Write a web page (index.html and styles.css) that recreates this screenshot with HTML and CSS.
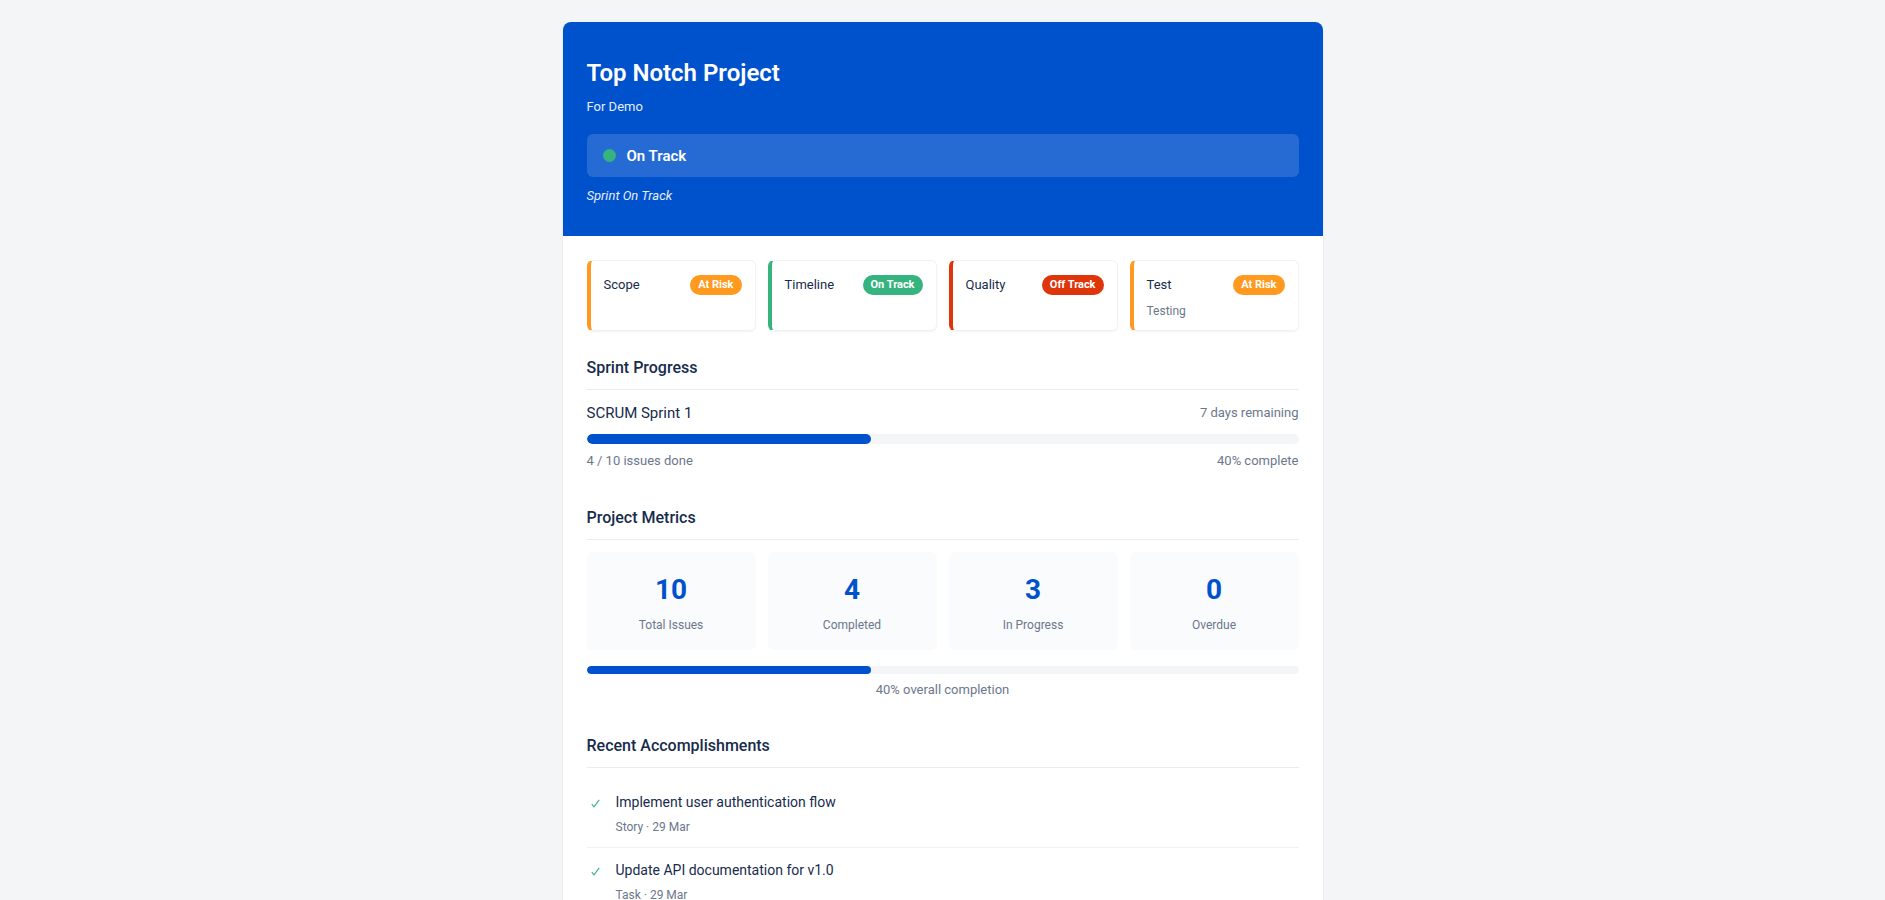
FILE: index.html
```html
<!DOCTYPE html>
<html>
	<head>
		<meta charset="utf-8">
		<title>Top Notch Project</title>
		<link rel="stylesheet" href="styles.css">
	</head>
	<body>
		<div class="report">
			<div class="report-head">
				<h1 class="project-name">Top Notch Project</h1>
				<div class="project-desc">For Demo</div>
				<div class="overall">
					<span class="dot"></span>
					<span class="overall-text">On Track</span>
				</div>
				<div class="overall-note">Sprint On Track</div>
			</div>

			<div class="report-body">
				<div class="status-grid">
					<div class="status-card orange">
						<div class="status-top">
							<span class="status-name">Scope</span>
							<span class="badge bg-orange">At Risk</span>
						</div>
					</div>
					<div class="status-card green">
						<div class="status-top">
							<span class="status-name">Timeline</span>
							<span class="badge bg-green">On Track</span>
						</div>
					</div>
					<div class="status-card red">
						<div class="status-top">
							<span class="status-name">Quality</span>
							<span class="badge bg-red">Off Track</span>
						</div>
					</div>
					<div class="status-card orange">
						<div class="status-top">
							<span class="status-name">Test</span>
							<span class="badge bg-orange">At Risk</span>
						</div>
						<div class="status-desc">Testing</div>
					</div>
				</div>

				<div class="section">
					<h2 class="section-title">Sprint Progress</h2>
					<div class="sprint">
						<div class="row">
							<span class="sprint-name">SCRUM Sprint 1</span>
							<span class="muted">7 days remaining</span>
						</div>
						<div class="track"><div class="fill" style="width: 40%"></div></div>
						<div class="row small">
							<span class="muted">4 / 10 issues done</span>
							<span class="muted">40% complete</span>
						</div>
					</div>
				</div>

				<div class="section">
					<h2 class="section-title">Project Metrics</h2>
					<div class="metrics">
						<div class="metric">
							<div class="metric-num">10</div>
							<div class="metric-label">Total Issues</div>
						</div>
						<div class="metric">
							<div class="metric-num">4</div>
							<div class="metric-label">Completed</div>
						</div>
						<div class="metric">
							<div class="metric-num">3</div>
							<div class="metric-label">In Progress</div>
						</div>
						<div class="metric">
							<div class="metric-num">0</div>
							<div class="metric-label">Overdue</div>
						</div>
					</div>
					<div class="track thin"><div class="fill" style="width: 40%"></div></div>
					<div class="overall-done">40% overall completion</div>
				</div>

				<div class="section">
					<h2 class="section-title">Recent Accomplishments</h2>
					<ul class="done-list">
						<li>
							<span class="check"><svg width="9" height="9" viewBox="0 0 9 9"><path d="M0.8 5.2 L3 7.8 L8.2 0.8" fill="none" stroke="#36b37e" stroke-width="1.1"/></svg></span>
							<div>
								<div class="done-title">Implement user authentication flow</div>
								<div class="done-meta">Story · 29 Mar</div>
							</div>
						</li>
						<li>
							<span class="check"><svg width="9" height="9" viewBox="0 0 9 9"><path d="M0.8 5.2 L3 7.8 L8.2 0.8" fill="none" stroke="#36b37e" stroke-width="1.1"/></svg></span>
							<div>
								<div class="done-title">Update API documentation for v1.0</div>
								<div class="done-meta">Task · 29 Mar</div>
							</div>
						</li>
					</ul>
				</div>
			</div>
		</div>
	</body>
</html>
```

FILE: styles.css
```css
*{
	margin: 0;
	padding: 0;
	box-sizing: border-box;
}
body{
	background-color: #f4f5f7;
	font-family: "Segoe UI", Roboto, "Noto Sans", sans-serif;
	color: #172b4d;
}
.report{
	width: 760px;
	margin: 22px auto;
	background-color: #fff;
	border-radius: 8px;
	box-shadow: 0 1px 3px rgba(9,30,66,0.08);
	overflow: hidden;
}
.report-head{
	background-color: #0052cc;
	color: #fff;
	padding: 33px 24px 30px;
}
.project-name{
	font-size: 24px;
	font-weight: 600;
	line-height: 36px;
}
.project-desc{
	font-size: 13px;
	line-height: 19.5px;
	margin-top: 6px;
	opacity: 0.9;
}
.overall{
	display: flex;
	align-items: center;
	gap: 11px;
	margin-top: 17px;
	padding: 11px 16px 10px;
	background-color: rgba(255,255,255,0.15);
	border-radius: 6px;
}
.dot{
	width: 13px;
	height: 13px;
	border-radius: 50%;
	background-color: #36b37e;
}
.overall-text{
	font-size: 15px;
	font-weight: 600;
	line-height: 22.5px;
}
.overall-note{
	font-size: 13px;
	font-style: italic;
	line-height: 19.5px;
	margin-top: 9px;
	opacity: 0.9;
}
.report-body{
	padding: 24px;
}
.status-grid{
	display: grid;
	grid-template-columns: repeat(4, 1fr);
	gap: 12px;
	margin-bottom: 26px;
}
.status-card{
	border: 1px solid #f1f2f4;
	border-left: 4px solid #ff991f;
	border-radius: 6px;
	padding: 14px 13px 10px;
	box-shadow: 0 1px 2px rgba(9,30,66,0.06);
}
.status-card.green{
	border-left-color: #36b37e;
}
.status-card.red{
	border-left-color: #de350b;
}
.status-top{
	display: flex;
	justify-content: space-between;
	align-items: center;
	height: 20px;
}
.status-name{
	font-size: 13px;
	font-weight: 400;
}
.badge{
	font-size: 11px;
	font-weight: 700;
	color: #fff;
	line-height: 20px;
	padding: 0 8px;
	border-radius: 10px;
}
.bg-orange{
	background-color: #ff991f;
}
.bg-green{
	background-color: #36b37e;
}
.bg-red{
	background-color: #de350b;
}
.status-desc{
	font-size: 12px;
	line-height: 18px;
	color: #6b778c;
	margin-top: 7px;
}
.section{
	margin-bottom: 24px;
}
.section-title{
	font-size: 16px;
	font-weight: 500;
	line-height: 22.4px;
	padding-bottom: 10px;
	border-bottom: 1px solid #ebecf0;
	margin-bottom: 12px;
}
.sprint{
	padding-bottom: 12px;
}
.row{
	display: flex;
	justify-content: space-between;
	align-items: center;
	line-height: 22.5px;
}
.row.small{
	margin-top: 7px;
	line-height: 19.5px;
}
.sprint-name{
	font-size: 15px;
	font-weight: 400;
}
.muted{
	font-size: 13px;
	color: #6b778c;
}
.track{
	height: 10px;
	margin-top: 10px;
	background-color: #f4f5f7;
	border-radius: 5px;
	overflow: hidden;
}
.track.thin{
	height: 8px;
	margin-top: 16px;
	border-radius: 4px;
}
.fill{
	height: 100%;
	background-color: #0052cc;
	border-radius: 5px;
}
.metrics{
	display: grid;
	grid-template-columns: repeat(4, 1fr);
	gap: 12px;
}
.metric{
	background-color: #fafbfc;
	border-radius: 6px;
	padding: 20px 12px 16px;
	text-align: center;
}
.metric-num{
	font-size: 28px;
	font-weight: 700;
	line-height: 36px;
	color: #0052cc;
}
.metric-label{
	font-size: 12px;
	line-height: 18px;
	color: #6b778c;
	margin-top: 8px;
}
.overall-done{
	font-size: 13px;
	line-height: 19.5px;
	color: #6b778c;
	text-align: center;
	margin-top: 6px;
	padding-bottom: 11px;
}
.done-list{
	list-style: none;
}
.done-list li{
	display: flex;
	gap: 11px;
	padding: 12px 0 11px;
	border-bottom: 1px solid #f0f1f3;
}
.check{
	width: 18px;
	flex-shrink: 0;
	display: flex;
	justify-content: center;
	padding-top: 7px;
}
.check svg{
	display: block;
}
.done-title{
	font-size: 14px;
	line-height: 21px;
}
.done-meta{
	font-size: 12px;
	line-height: 18px;
	color: #6b778c;
	margin-top: 5px;
}
```
